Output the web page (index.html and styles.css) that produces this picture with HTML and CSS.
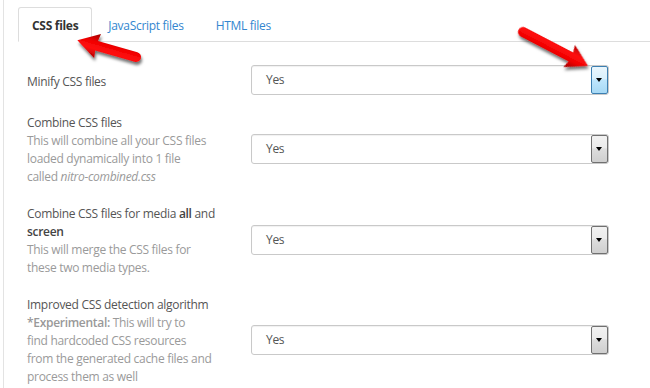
FILE: index.html
```html
<!DOCTYPE html>
<html lang="en">
<head>
    <meta charset="UTF-8">
    <meta name="viewport" content="width=device-width, initial-scale=1.0">
    <title>CSS files</title>
    <link rel="stylesheet" href="styles.css">
</head>
<body>
    <div class="panel">
        <ul class="tabs">
            <li class="tab active">CSS files</li>
            <li class="tab"><a href="#">JavaScript files</a></li>
            <li class="tab"><a href="#">HTML files</a></li>
        </ul>

        <div class="settings">
            <div class="row">
                <div class="label">Minify CSS files</div>
                <div class="select focus">
                    <span class="value">Yes</span>
                    <span class="select-btn"></span>
                </div>
            </div>
            <div class="row">
                <div class="label">
                    Combine CSS files<br>
                    <span class="desc">This will combine all your CSS files<br>loaded dynamically into 1 file<br>called <em>nitro-combined.css</em></span>
                </div>
                <div class="select">
                    <span class="value">Yes</span>
                    <span class="select-btn"></span>
                </div>
            </div>
            <div class="row">
                <div class="label">
                    Combine CSS files for media <b>all</b> and<br><b>screen</b><br>
                    <span class="desc">This will merge the CSS files for<br>these two media types.</span>
                </div>
                <div class="select">
                    <span class="value">Yes</span>
                    <span class="select-btn"></span>
                </div>
            </div>
            <div class="row">
                <div class="label">
                    Improved CSS detection algorithm<br>
                    <span class="desc"><b>*Experimental:</b> This will try to<br>find hardcoded CSS resources<br>from the generated cache files and<br>process them as well</span>
                </div>
                <div class="select">
                    <span class="value">Yes</span>
                    <span class="select-btn"></span>
                </div>
            </div>
        </div>
    </div>

    <!-- red callout arrows drawn over the page -->
    <svg class="arrows" width="650" height="388" viewBox="0 0 650 388">
        <defs>
            <filter id="shadow" x="-30%" y="-30%" width="160%" height="160%">
                <feDropShadow dx="1" dy="3" stdDeviation="1.6" flood-color="#000" flood-opacity="0.55"/>
            </filter>
            <linearGradient id="red" gradientUnits="userSpaceOnUse" x1="0" y1="-12" x2="0" y2="12">
                <stop offset="0" stop-color="#b80000"/>
                <stop offset="0.35" stop-color="#ff1010"/>
                <stop offset="0.65" stop-color="#f00000"/>
                <stop offset="1" stop-color="#a00000"/>
            </linearGradient>
        </defs>
        <g filter="url(#shadow)">
            <g transform="translate(136 57) rotate(196)" fill="url(#red)">
                <path d="M0 -5 L41 -5 L40 -12.5 L61 0 L40 12.5 L41 5 L0 5 A5 5 0 0 1 0 -5 Z"/>
            </g>
            <g transform="translate(523 32) rotate(27.5)" fill="url(#red)">
                <path d="M0 -5 L54 -5 L52 -12.5 L73 0 L52 12.5 L54 5 L0 5 A5 5 0 0 1 0 -5 Z"/>
            </g>
        </g>
    </svg>
</body>
</html>
```

FILE: styles.css
```css
body {
    margin: 0;
    font-family: "Open Sans", "Liberation Sans", sans-serif;
    font-size: 12px;
    letter-spacing: -0.3px;
    color: #555;
    background: #fff;
    overflow: hidden;
}
.panel {
    margin-left: 3px;
    border-left: 1px solid #e3e3e3;
    min-height: 388px;
    padding: 7px 0 0 14px;
    box-sizing: border-box;
}
.tabs {
    display: flex;
    margin: 0;
    padding: 0;
    list-style: none;
    border-bottom: 1px solid #ddd;
}
.tab {
    height: 35px;
    line-height: 35px;
    padding: 0 15px;
    margin-bottom: -1px;
    border: 1px solid transparent;
    box-sizing: border-box;
}
.tab.active {
    padding: 0 13px;
    border-color: #ddd #ddd transparent #ddd;
    border-radius: 3px 3px 0 0;
    background: #fff;
    font-weight: bold;
    color: #333;
}
.tab a {
    color: #3386cf;
    text-decoration: none;
}
.settings {
    padding: 15px 0 0 9px;
}
.row {
    display: flex;
    align-items: center;
    padding: 8px 0;
}
.label {
    width: 224px;
    padding-top: 3px;
    line-height: 18px;
    color: #555;
}
.label b {
    font-weight: 600;
    color: #444;
}
.desc {
    color: #9a9a9a;
}
.desc b {
    color: #999;
}
.select {
    display: flex;
    align-items: stretch;
    width: 358px;
    height: 30px;
    box-sizing: border-box;
    border: 1px solid #c9c9c9;
    border-radius: 3px;
    box-shadow: inset 0 1px 1px rgba(0, 0, 0, 0.06);
}
.value {
    flex: 1;
    padding-left: 14px;
    line-height: 28px;
    color: #555;
}
.select-btn {
    position: relative;
    width: 17px;
    border: 1px solid #707070;
    border-radius: 2px;
    box-sizing: border-box;
    background: linear-gradient(#f2f2f2 0%, #ebebeb 45%, #dddddd 50%, #cfcfcf 100%);
}
.select-btn::after {
    content: "";
    position: absolute;
    left: 4px;
    top: 11px;
    border-left: 3.5px solid transparent;
    border-right: 3.5px solid transparent;
    border-top: 4px solid #000;
}
.select.focus .select-btn {
    border-color: #3c7fb1;
    background: linear-gradient(#eaf6fd 0%, #d9f0fc 45%, #bee6fd 50%, #a7d9f5 100%);
}
.arrows {
    position: absolute;
    left: 0;
    top: 0;
    pointer-events: none;
}
```
